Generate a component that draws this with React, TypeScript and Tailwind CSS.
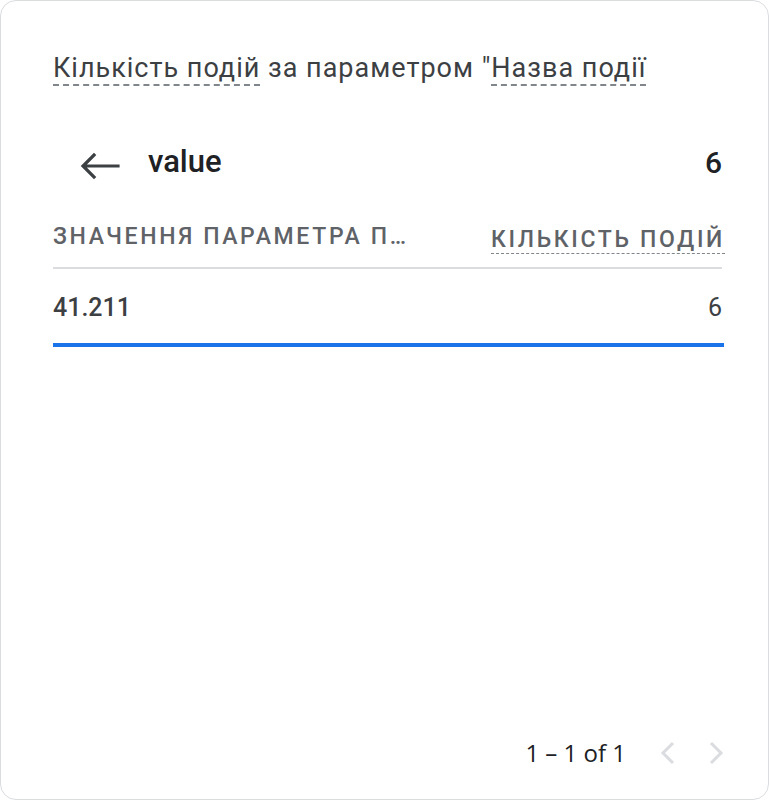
import React from "react";

const rows = [{ label: "41.211", count: 6 }];

const BackArrow = () => (
  <svg width="40" height="28" viewBox="0 0 40 28" fill="none">
    <path d="M38 14H4M14 3L3 14l11 11" stroke="#3c4043" strokeWidth="3.2" strokeLinecap="square" />
  </svg>
);

const Chevron = ({ dir }: { dir: "left" | "right" }) => (
  <svg width="16" height="26" viewBox="0 0 16 26" fill="none">
    <path d={dir === "left" ? "M13 3L3 13l10 10" : "M3 3l10 10L3 23"} stroke="#dadce0" strokeWidth="3" />
  </svg>
);

const App = () => {
  return (
    <div className="w-[769px] h-[800px] bg-white font-['Roboto',sans-serif]">
      <div className="h-full border border-[#dadce0] rounded-2xl flex flex-col pl-[52px] pr-[46px]">
        <h2 className="mt-[48px] text-[27px] leading-[38px] text-[#3c4043] tracking-[1px]">
          <span className="underline decoration-dashed decoration-[#80868b] decoration-2 underline-offset-[7px]">Кількість подій</span>{" "}
          за параметром "
          <span className="underline decoration-dashed decoration-[#80868b] decoration-2 underline-offset-[7px]">Назва події</span>
        </h2>

        <div className="flex items-center justify-between mt-[52px]">
          <div className="flex items-center">
            <div className="ml-[27px] mt-[8px]">
              <BackArrow />
            </div>
            <span className="ml-[28px] text-[31px] font-medium text-[#202124]">value</span>
          </div>
          <span className="text-[30px] font-medium text-[#202124]">6</span>
        </div>

        <div className="flex items-end justify-between mt-[34px] pb-[13px] border-b-2 border-[#dadce0] text-[23px] font-medium uppercase tracking-[0.115em] text-[#5f6368]">
          <span>Значення параметра п…</span>
          <span className="border-b border-dashed border-[#80868b] leading-[26px] -mr-[3px]">Кількість подій</span>
        </div>

        {rows.map((r, i) => (
          <div key={i} className="flex flex-col">
            <div className="flex items-center justify-between pt-[20px] pb-[16px] text-[25px] text-[#3c4043]">
              <span className="font-medium">{r.label}</span>
              <span>{r.count}</span>
            </div>
            <div className="h-[4px] bg-[#1a73e8] -mr-[2px]" />
          </div>
        ))}

        <div className="mt-auto mb-[28px] flex items-center justify-end gap-[8px] -mr-[2px]">
          <span className="font-['Open_Sans',sans-serif] text-[24px] text-[#202124] mr-[26px] whitespace-pre">1 – 1 of 1</span>
          <Chevron dir="left" />
          <div className="w-[16px]" />
          <Chevron dir="right" />
        </div>
      </div>
    </div>
  );
};

export default App;
